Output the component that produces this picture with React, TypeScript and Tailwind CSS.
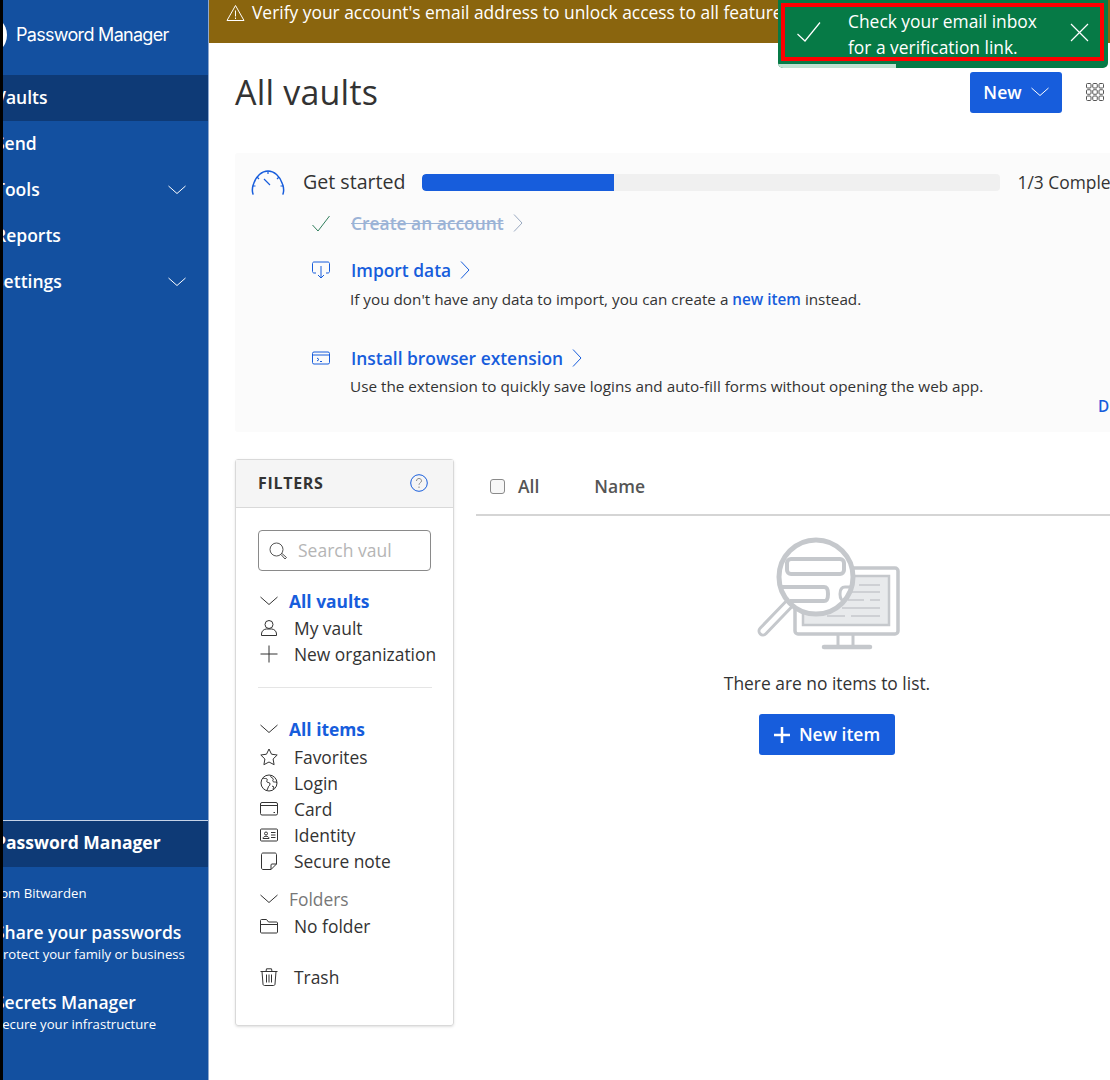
const Chevron = ({ className = "" }: { className?: string }) => (
  <svg className={className} width="18" height="10" viewBox="0 0 18 10" fill="none" stroke="currentColor" strokeWidth="1">
    <path d="M.5 1 9 8.5 17.5 1" />
  </svg>
);

const RightChevron = ({ className = "" }: { className?: string }) => (
  <svg className={className} width="10" height="18" viewBox="0 0 10 18" fill="none" stroke="currentColor" strokeWidth="1">
    <path d="M1 .5 9 9l-8 8.5" />
  </svg>
);

const FilterIcon = ({ name }: { name: string }) => {
  const paths: Record<string, React.ReactNode> = {
    user: (
      <>
        <circle cx="9" cy="5.5" r="4" />
        <path d="M1.5 16.5v-1.5c0-3 2.5-5 5-5h5c2.5 0 5 2 5 5v1.5z" />
      </>
    ),
    plus: <path d="M9 .5v17M.5 9h17" />,
    star: <path d="m9 1 2.5 5.2 5.7.8-4.1 4 1 5.7L9 14l-5.1 2.7 1-5.7-4.1-4 5.7-.8z" />,
    globe: (
      <>
        <circle cx="9" cy="9" r="8" />
        <path d="M3 4c2 1 3 0 4 1s-1 2 0 3 3 0 3 2-2 2-2 4l-1 2M11 1.500c-1 2 1 2 2 3s-1 2 0 3 2 0 4 1M12 12l2 1-1 2" />
      </>
    ),
    card: (
      <>
        <rect x=".5" y="2.500" width="17" height="12.500" rx="1.500" />
        <path d="M.5 5.500h17M13.500 12.500h1.500" />
      </>
    ),
    identity: (
      <>
        <rect x=".5" y="3" width="17" height="12" rx="1" />
        <circle cx="6" cy="7.500" r="1.500" />
        <path d="M3 12.500c0-3 6-3 6 0zM11 6.500h4.500M11 9h4.500M11 11.500h4.500" />
      </>
    ),
    note: <path d="M3 1h12c.8 0 1.500.7 1.500 1.500V12L11 17.500H3c-.8 0-1.500-.7-1.500-1.500V2.500C1.500 1.700 2.200 1 3 1zM16.500 12H12c-.6 0-1 .4-1 1v4.500" />,
    folder: <path d="M1.500 2.500h5L8.500 5h8c.6 0 1 .4 1 1v9c0 .6-.4 1-1 1h-15c-.6 0-1-.4-1-1V3.500c0-.6.4-1 1-1zM.5 7.500h17" />,
    trash: <path d="M.5 3.500h17M2 3.500l1 12.500c0 1 .7 1.500 1.500 1.500h9c.8 0 1.500-.5 1.500-1.500l1-12.500M6 3.500 6.500 .8h5l.5 2.700M6.500 6.500v8M9 6.500v8M11.500 6.500v8" />,
  };
  return (
    <svg className="w-[18px] h-[18px] shrink-0 text-[#333]" viewBox="0 0 18 18" fill="none" stroke="currentColor" strokeWidth="1">
      {paths[name]}
    </svg>
  );
};

const FilterRow = ({ icon, label }: { icon: string; label: string }) => (
  <div className="flex items-center h-[26px] pl-[2px] text-[#333] text-[17.4px]">
    <FilterIcon name={icon} />
    <span className="ml-[16px] whitespace-nowrap">{label}</span>
  </div>
);

const FilterHeading = ({ label, muted, gap }: { label: string; muted?: boolean; gap: string }) => (
  <div className={`flex items-center h-[26px] pl-[2px] ${gap}`}>
    <Chevron className="text-[#333] shrink-0" />
    <span className={muted ? "ml-[11px] text-[17.4px] text-[#777]" : "ml-[11px] text-[17.4px] font-bold text-[#175ddc]"}>{label}</span>
  </div>
);

const NavItem = ({ label, active, caret, offset }: { label: string; active?: boolean; caret?: boolean; offset: string }) => (
  <div className={active ? "flex items-center h-[46px] bg-[#0e3a76] pr-[22px]" : "flex items-center h-[46px] pr-[22px]"}>
    <span className={`text-[17.5px] font-semibold text-white flex-1 pb-[2px] whitespace-nowrap ${offset}`}>{label}</span>
    {caret && <Chevron className="text-white" />}
  </div>
);

const EmptyIllustration = () => (
  <svg className="ml-[6px]" width="150" height="125" viewBox="35 8 150 125" fill="none" stroke="#c5c8cc">
    <rect x="75" y="39" width="103" height="66" rx="3" strokeWidth="3.500" fill="#fff" />
    <rect x="83" y="47" width="86" height="49" fill="#e8eaec" strokeWidth="2.500" />
    <path d="M139 56h21M128 63h32M150 71h10M128 71h16M122 79h38M107 87h18M131 87h29" strokeWidth="1.500" />
    <path d="M118 106v11M133 106v11" strokeWidth="3" />
    <path d="M104 118h46" strokeWidth="4.500" strokeLinecap="round" />
    <path d="M68 76 43 102" strokeWidth="11" strokeLinecap="round" />
    <path d="M68 76 43 102" strokeWidth="5" strokeLinecap="round" stroke="#fff" />
    <circle cx="96" cy="48" r="37" strokeWidth="5" fill="#fff" />
    <rect x="67" y="30" width="57" height="15" rx="4" strokeWidth="4" />
    <path d="M61 58h43c3 0 4 2 4 7s-1 7-4 7H70" strokeWidth="4" />
    <path d="M131 58h-6c-4 0-5 4-5 7s1 7 5 7" strokeWidth="3" />
  </svg>
);

export default function App() {
  return (
    <div className="relative flex w-[1110px] h-[1080px] overflow-hidden bg-white font-['Open_Sans',sans-serif]">
      <div className="w-[3px] shrink-0 bg-black" />

      <aside className="w-[206px] shrink-0 flex flex-col overflow-hidden bg-[#1350a0] border-r border-[#8fa9cf]">
        <div className="flex items-center h-[75px] pb-[6px] shrink-0">
          <div className="w-10 h-10 rounded-full bg-white -ml-[36px] shrink-0" />
          <span className="ml-[9px] text-[18px] text-white font-['Inter',sans-serif] tracking-[-0.7px] whitespace-nowrap">Password Manager</span>
        </div>
        <NavItem label="Vaults" active offset="-ml-[8px]" />
        <NavItem label="Send" offset="-ml-[8px]" />
        <NavItem label="Tools" caret offset="-ml-[8px]" />
        <NavItem label="Reports" offset="-ml-[8px]" />
        <NavItem label="Settings" caret offset="-ml-[9px]" />

        <div className="mt-auto flex flex-col h-[260px] shrink-0">
          <div className="h-[47px] flex items-center pb-[3px] border-t border-[#c5d3e8] bg-[#0e3a76]">
            <span className="text-[17.5px] font-bold text-white -ml-[8px] whitespace-nowrap">Password Manager</span>
          </div>
          <span className="mt-[17px] text-[13.15px] leading-[18px] text-white -ml-[15px] whitespace-nowrap">From Bitwarden</span>
          <span className="mt-[18px] text-[17.5px] leading-[24px] font-semibold text-white -ml-[8px] whitespace-nowrap">Share your passwords</span>
          <span className="text-[13.15px] leading-[20px] text-white -ml-[8px] whitespace-nowrap">Protect your family or business</span>
          <span className="mt-[26px] text-[17.5px] leading-[24px] font-semibold text-white -ml-[8px] whitespace-nowrap">Secrets Manager</span>
          <span className="text-[13.15px] leading-[20px] text-white -ml-[8px] whitespace-nowrap">Secure your infrastructure</span>
        </div>
      </aside>

      <main className="flex-1 min-w-0 flex flex-col overflow-hidden">
        <div className="h-[43px] shrink-0 flex items-center pl-[17px] pb-[18px] bg-[#8a650e] text-white text-[17.4px] whitespace-nowrap">
          <svg className="w-[19px] h-[18px] shrink-0" viewBox="0 0 19 18" fill="none" stroke="currentColor" strokeWidth="1">
            <path d="M9.500 1.500 18 16.500H1z" strokeLinejoin="round" />
            <path d="M9.500 6.500v6M9.500 13.500v1.500" />
          </svg>
          <span className="ml-[7px]">Verify your account's email address to unlock access to all features.</span>
        </div>

        <div className="w-[943px] ml-[26px] flex flex-col">
          <div className="flex items-center h-[98px] mb-[12px] pr-[74px] shrink-0">
            <h1 className="flex-1 text-[34px] font-normal text-[#333] tracking-[0.2px]">All vaults</h1>
            <button type="button" className="flex items-center justify-center w-[92px] h-[41px] rounded-[3px] bg-[#175ddc] text-white text-[17.6px] font-semibold">
              New
              <Chevron className="ml-[9px]" />
            </button>
            <svg className="ml-[24px] w-[18px] h-[18px] text-[#555]" viewBox="0 0 18 18" fill="none" stroke="currentColor" strokeWidth="1">
              <rect x=".5" y=".5" width="4.500" height="4.500" rx="1" />
              <rect x="6.750" y=".5" width="4.500" height="4.500" rx="1" />
              <rect x="13" y=".5" width="4.500" height="4.500" rx="1" />
              <rect x=".5" y="6.750" width="4.500" height="4.500" rx="1" />
              <rect x="6.750" y="6.750" width="4.500" height="4.500" rx="1" />
              <rect x="13" y="6.750" width="4.500" height="4.500" rx="1" />
              <rect x=".5" y="13" width="4.500" height="4.500" rx="1" />
              <rect x="6.750" y="13" width="4.500" height="4.500" rx="1" />
              <rect x="13" y="13" width="4.500" height="4.500" rx="1" />
            </svg>
          </div>

          <section className="h-[279px] shrink-0 bg-[#fbfbfb] rounded-[3px] flex flex-col">
            <div className="flex items-center h-[30px] mt-[14px] pl-[16px]">
              <svg className="w-[34px] h-[26px] shrink-0 text-[#175ddc]" viewBox="0 0 34 26" fill="none" stroke="currentColor" strokeWidth="1.500">
                <path d="M2 25c-1-3-1-6 .5-10C5 7 11 2 17 2s12 5 14.500 13c1.500 4 1.500 7 .5 10" strokeLinecap="round" />
                <path d="M13 10l6 6M17 2v3M6 8l2 2M28 8l-2 2M1.500 17h3M32.500 17h-3" strokeWidth="1.200" />
              </svg>
              <span className="ml-[18px] text-[19.6px] text-[#333] whitespace-nowrap">Get started</span>
              <div className="ml-[16px] w-[578px] h-[17px] shrink-0 rounded-[4px] bg-[#f0f0f0] overflow-hidden">
                <div className="w-[192px] h-full rounded-l-[4px] bg-[#175ddc]" />
              </div>
              <span className="ml-[18px] text-[17.4px] text-[#333] whitespace-nowrap">1/3 Complete</span>
            </div>

            <div className="flex items-center h-[24px] mt-[14px] pl-[77px]">
              <svg className="w-[18px] h-[17px] shrink-0 text-[#2f7d5b]" viewBox="0 0 18 17" fill="none" stroke="currentColor" strokeWidth="1">
                <path d="M.5 10 6 16 17.500 1" />
              </svg>
              <span className="ml-[21px] text-[17.4px] font-semibold text-[#9bb3d6] line-through">Create an account</span>
              <RightChevron className="ml-[9px] text-[#9aa9c0]" />
            </div>

            <div className="flex items-center h-[24px] mt-[23px] pl-[77px] text-[#175ddc]">
              <svg className="w-[18px] h-[18px] shrink-0" viewBox="0 0 18 18" fill="none" stroke="currentColor" strokeWidth="1">
                <path d="M4 12H2c-.8 0-1.500-.7-1.500-1.500v-8C.5 1.700 1.200 1 2 1h14c.8 0 1.500.7 1.500 1.500v8c0 .8-.7 1.500-1.500 1.500h-2M9 5v12M6 14l3 3 3-3" />
              </svg>
              <span className="ml-[21px] text-[17.4px] font-semibold">Import data</span>
              <RightChevron className="ml-[9px]" />
            </div>
            <p className="mt-[5px] ml-[115px] text-[15.27px] leading-[24px] text-[#333] whitespace-nowrap">
              If you don't have any data to import, you can create a <span className="font-semibold text-[#175ddc]">new item</span> instead.
            </p>

            <div className="flex items-center h-[24px] mt-[35px] pl-[77px] text-[#175ddc]">
              <svg className="w-[18px] h-[14px] shrink-0" viewBox="0 0 18 14" fill="none" stroke="currentColor" strokeWidth="1">
                <rect x=".5" y="1" width="17" height="12" rx="1.500" />
                <path d="M.5 4h17M5 7l2 1.500L5 10M8 10.500h2" />
              </svg>
              <span className="ml-[21px] text-[17.4px] font-semibold">Install browser extension</span>
              <RightChevron className="ml-[9px]" />
            </div>
            <p className="mt-[4px] ml-[115px] text-[15.27px] leading-[24px] text-[#333] whitespace-nowrap">
              Use the extension to quickly save logins and auto-fill forms without opening the web app.
            </p>
            <div className="mt-[-4px] ml-[863px] text-[15.3px] leading-[24px] font-semibold text-[#175ddc] whitespace-nowrap">Dismiss</div>
          </section>

          <div className="flex gap-[22px] mt-[27px]">
            <div className="w-[219px] h-[567px] shrink-0 border border-[#d9d9d9] rounded-[3px] shadow-sm flex flex-col">
              <div className="h-[48px] shrink-0 flex items-center justify-between pl-[22px] pr-[25px] pb-[2px] bg-[#f5f5f5] border-b border-[#d9d9d9]">
                <span className="text-[16px] font-bold text-[#333] tracking-[0.7px]">FILTERS</span>
                <svg className="w-[18px] h-[18px] text-[#175ddc]" viewBox="0 0 18 18" fill="none" stroke="currentColor" strokeWidth="1">
                  <circle cx="9" cy="9" r="8.300" />
                  <path d="M6.500 7c0-1.500 1-2.500 2.500-2.500s2.500 1 2.500 2.300c0 2-2.500 2-2.500 4M9 12.500V14" stroke="#8a8a8a" />
                </svg>
              </div>
              <div className="flex flex-col px-[22px] pt-[22px]">
                <div className="flex items-center w-[173px] h-[41px] border border-[#8a8a8a] rounded-[4px] pl-[10px]">
                  <svg className="w-[18px] h-[18px] shrink-0 text-[#555]" viewBox="0 0 18 18" fill="none" stroke="currentColor" strokeWidth="1">
                    <circle cx="7.500" cy="7.500" r="6.500" />
                    <path d="m12 12.500 4 4.500 1.500-1.500-4.500-4" />
                  </svg>
                  <span className="ml-[11px] text-[17.5px] text-[#b5b5b5] whitespace-nowrap">Search vaul</span>
                </div>
                <div className="mt-[17px]">
                  <FilterHeading label="All vaults" gap="mb-px" />
                  <FilterRow icon="user" label="My vault" />
                  <FilterRow icon="plus" label="New organization" />
                </div>
                <div className="w-[174px] h-px bg-[#e5e5e5] mt-[20px]" />
                <div className="mt-[28px]">
                  <FilterHeading label="All items" gap="mb-[2px]" />
                  <FilterRow icon="star" label="Favorites" />
                  <FilterRow icon="globe" label="Login" />
                  <FilterRow icon="card" label="Card" />
                  <FilterRow icon="identity" label="Identity" />
                  <FilterRow icon="note" label="Secure note" />
                </div>
                <div className="mt-[12px]">
                  <FilterHeading label="Folders" muted gap="mb-px" />
                  <FilterRow icon="folder" label="No folder" />
                </div>
                <div className="mt-[25px]">
                  <FilterRow icon="trash" label="Trash" />
                </div>
              </div>
            </div>

            <div className="flex-1 min-w-0 flex flex-col">
              <div className="flex items-center h-[57px] pb-px shrink-0 border-b-2 border-[#d5d5d5] pl-[14px]">
                <span className="w-[15px] h-[15px] rounded-[3px] border border-[#8a8a8a] bg-[#f7f7f7] shrink-0" />
                <span className="ml-[13px] text-[17.5px] font-semibold text-[#555]">All</span>
                <span className="ml-[55px] text-[17.5px] font-semibold text-[#555]">Name</span>
              </div>
              <div className="flex flex-col items-center mt-[21px]">
                <EmptyIllustration />
                <p className="mt-[9px] text-[17.4px] leading-[24px] text-[#333]">There are no items to list.</p>
                <button type="button" className="mt-[19px] flex items-center justify-center w-[136px] h-[41px] rounded-[3px] bg-[#175ddc] text-white text-[17.5px] font-semibold">
                  <svg className="w-[16px] h-[16px] mr-[9px]" viewBox="0 0 16 16" fill="none" stroke="currentColor" strokeWidth="2.500">
                    <path d="M8 0v16M0 8h16" />
                  </svg>
                  New item
                </button>
              </div>
            </div>
          </div>
        </div>
      </main>

      <div className="absolute left-[778px] top-0 w-[330px] h-[68px] rounded-b-[5px] bg-[#067a46] overflow-hidden text-white">
        <div className="ml-[3px] mr-[4px] mt-[3px] h-[58px] border-[4px] border-[#ff0000] flex items-center">
          <svg className="ml-[12px] w-[24px] h-[20px] shrink-0" viewBox="0 0 24 20" fill="none" stroke="currentColor" strokeWidth="1.200">
            <path d="M.5 12 8 19 23 .5" />
          </svg>
          <p className="ml-[27px] mt-[4px] w-[210px] text-[17.4px] leading-[26px]">Check your email inbox for a verification link.</p>
          <svg className="ml-[12px] w-[19px] h-[19px] shrink-0" viewBox="0 0 19 19" fill="none" stroke="currentColor" strokeWidth="1.200">
            <path d="m1 1 17 17M18 1 1 18" />
          </svg>
        </div>
        <div className="absolute left-0 bottom-0 w-[118px] h-[4px] bg-[#bfe0d0]" />
      </div>
    </div>
  );
}
